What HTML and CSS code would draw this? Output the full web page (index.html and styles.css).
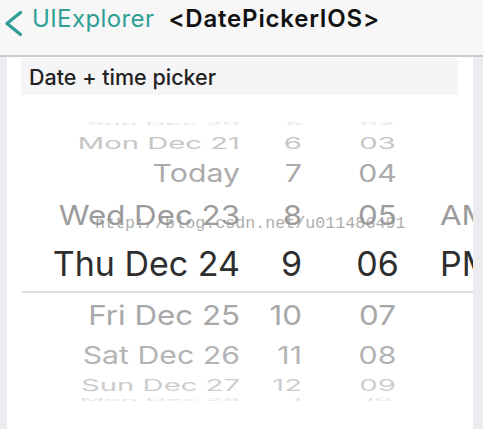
FILE: index.html
```html
<!DOCTYPE html>
<html lang="en">
<head>
<meta charset="utf-8">
<title>DatePickerIOS</title>
<link rel="stylesheet" href="styles.css">
</head>
<body>
<header class="nav">
  <svg class="chevron" width="24" height="28" viewBox="0 0 24 28" aria-hidden="true">
    <path d="M18.5 2.5 L5 13.5 L18.5 24.5" fill="none" stroke="#2f9f96" stroke-width="3.4" stroke-linecap="round" stroke-linejoin="round"/>
  </svg>
  <span class="back">UIExplorer</span>
  <span class="title">&lt;DatePickerIOS&gt;</span>
</header>
<main class="page">
  <section class="panel">
    <div class="section-title">Date + time picker</div>
    <div class="picker">
      <div class="row r-top d4"><span class="c date">Sun Dec 20</span><span class="c hour">5</span><span class="c min">02</span><span class="c ampm"></span></div>
      <div class="row r-mon d3"><span class="c date">Mon Dec 21</span><span class="c hour">6</span><span class="c min">03</span><span class="c ampm"></span></div>
      <div class="row r-today d2"><span class="c date">Today</span><span class="c hour">7</span><span class="c min">04</span><span class="c ampm"></span></div>
      <div class="row r-wed d1"><span class="c date">Wed Dec 23</span><span class="c hour">8</span><span class="c min">05</span><span class="c ampm">AM</span></div>
      <div class="row r-sel"><span class="c date">Thu Dec 24</span><span class="c hour">9</span><span class="c min">06</span><span class="c ampm">PM</span></div>
      <div class="divider"></div>
      <div class="row r-fri d1"><span class="c date">Fri Dec 25</span><span class="c hour">10</span><span class="c min">07</span><span class="c ampm"></span></div>
      <div class="row r-sat d2"><span class="c date">Sat Dec 26</span><span class="c hour">11</span><span class="c min">08</span><span class="c ampm"></span></div>
      <div class="row r-sun d3"><span class="c date">Sun Dec 27</span><span class="c hour">12</span><span class="c min">09</span><span class="c ampm"></span></div>
      <div class="row r-bot d4"><span class="c date">Mon Dec 28</span><span class="c hour">1</span><span class="c min">10</span><span class="c ampm"></span></div>
      <div class="watermark">http://blog.csdn.net/u011486491</div>
    </div>
  </section>
</main>
</body>
</html>
```

FILE: styles.css
```css
* { box-sizing: border-box; }

html, body {
  margin: 0;
  padding: 0;
  height: 100%;
}

body {
  font-family: Inter, "Liberation Sans", sans-serif;
  background: #ebebf0;
  overflow: hidden;
}

.nav {
  height: 57px;
  background: #f7f7f7;
  border-bottom: 2px solid #cacaca;
  display: flex;
  align-items: flex-start;
  padding: 7px 0 0 2px;
  font-size: 24px;
  line-height: 24px;
}

.chevron {
  display: block;
  margin-top: 3px;
  flex: none;
}

.back {
  color: #2f9f96;
  margin-left: 6px;
  letter-spacing: 0.4px;
}

.title {
  color: #111;
  font-weight: 600;
  margin-left: 14px;
  letter-spacing: 0.8px;
}

.page {
  padding-left: 7px;
  height: calc(100% - 57px);
}

.panel {
  width: 466px;
  height: 100%;
  background: #fff;
  overflow: hidden;
  padding-top: 1px;
}

.section-title {
  margin-left: 14px;
  width: 437px;
  height: 37px;
  background: #f5f5f7;
  padding: 8px 0 0 8px;
  font-size: 21.5px;
  line-height: 22px;
  font-weight: 500;
  color: #222;
}

.picker {
  position: relative;
  margin-top: 20px;
  font-size: 34px;
  line-height: 34px;
  font-weight: 400;
}

.row {
  display: flex;
  align-items: center;
  white-space: nowrap;
  color: #2e2e2e;
}

.c {
  display: block;
  flex: none;
}

.date {
  width: 233px;
  text-align: right;
  transform-origin: right center;
}

.hour {
  width: 62px;
  text-align: right;
  transform-origin: right center;
}

.min {
  width: 85px;
  margin-left: 33px;
  text-align: center;
  transform-origin: center center;
}

.ampm {
  margin-left: 20px;
  transform-origin: left center;
}

.r-top { height: 18px; }
.r-mon { height: 20px; }
.r-today { height: 40px; }
.r-wed { height: 44px; }
.r-sel { height: 54px; }
.r-fri { height: 43px; }
.r-sat { height: 38px; }
.r-sun { height: 22px; }
.r-bot { height: 8px; }

.d1 { color: #9c9c9c; }
.d1 .c { transform: scale(0.92, 0.8); }
.d2 { color: #ababab; }
.d2 .c { transform: scale(0.89, 0.72); }
.d3 { color: #c6c6c6; }
.d3 .c { transform: scale(0.86, 0.46); }
.d4 { color: #e2e2e2; }
.d4 .c { transform: scale(0.82, 0.09); }

.r-fri { color: #a8a8a8; }
.r-sat { color: #b4b4b4; }
.r-sun { color: #cdcdcd; }

.divider {
  height: 2px;
  margin-left: 15px;
  background: #dedede;
}

.watermark {
  position: absolute;
  left: 88px;
  top: 100px;
  font-family: "Liberation Mono", monospace;
  font-size: 16.7px;
  line-height: 17px;
  color: rgba(150, 150, 150, 0.8);
  white-space: nowrap;
}
```
